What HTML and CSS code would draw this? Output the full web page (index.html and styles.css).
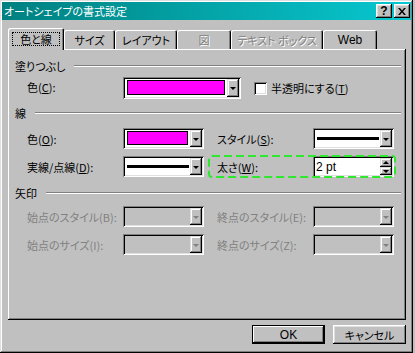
FILE: index.html
```html
<!DOCTYPE html>
<html lang="ja">
  <head>
    <meta charset="UTF-8" />
    <title>オートシェイプの書式設定</title>
    <link rel="stylesheet" href="styles.css">
  </head>
  <body>
    <div class="window">
      <div class="titlebar">
        <span class="title">オートシェイプの書式設定</span>
        <div class="caption">
          <span class="cap-btn help">?</span>
          <span class="cap-btn">
            <svg width="8" height="7" viewBox="0 0 8 7"><path d="M0 0h2l2 2.5 2-2.5h2l-3 3.5 3 3.5h-2l-2-2.5-2 2.5h-2l3-3.5z" fill="#000"/></svg>
          </span>
        </div>
      </div>

      <div class="client">
        <div class="tabs">
          <div class="tab active"><span class="focus">色と線</span></div>
          <div class="tab w-size">サイズ</div>
          <div class="tab w-layout">レイアウト</div>
          <div class="tab w-fig disabled">図</div>
          <div class="tab w-text disabled">テキスト ボックス</div>
          <div class="tab w-web latin">Web</div>
        </div>

        <div class="panel">
          <!-- 塗りつぶし -->
          <div class="group-head first"><span>塗りつぶし</span><i class="rule"></i></div>
          <div class="row r-fill">
            <span class="lbl">色(<u>C</u>):</span>
            <div class="combo wide">
              <div class="field"><span class="swatch"></span></div>
              <span class="drop"><i class="arrow"></i></span>
            </div>
            <span class="check"></span>
            <span class="check-label">半透明にする(<u>T</u>)</span>
          </div>

          <!-- 線 -->
          <div class="group-head g-line"><span>線</span><i class="rule"></i></div>
          <div class="row r-color">
            <span class="lbl">色(<u>O</u>):</span>
            <div class="combo">
              <div class="field"><span class="swatch"></span></div>
              <span class="drop"><i class="arrow"></i></span>
            </div>
            <div class="pair">
              <span class="lbl">スタイル(<u>S</u>):</span>
              <div class="combo">
                <div class="field"><span class="stroke"></span></div>
                <span class="drop"><i class="arrow"></i></span>
              </div>
            </div>
          </div>
          <div class="row r-dash">
            <span class="lbl">実線/点線(<u>D</u>):</span>
            <div class="combo">
              <div class="field"><span class="stroke"></span></div>
              <span class="drop"><i class="arrow"></i></span>
            </div>
            <div class="pair focused">
              <span class="lbl">太さ(<u>W</u>):</span>
              <div class="spin">
                <div class="field text latin">2 pt</div>
                <div class="spin-btns">
                  <span class="drop up"><i class="arrow"></i></span>
                  <span class="drop"><i class="arrow"></i></span>
                </div>
              </div>
              <svg class="focus-ring" width="188" height="23" viewBox="0 0 188 23">
                <rect x="1" y="1" width="186" height="21" rx="3" fill="none" stroke="#2ee82e" stroke-width="2" stroke-dasharray="8 4"/>
              </svg>
            </div>
          </div>

          <!-- 矢印 -->
          <div class="group-head g-arrow"><span>矢印</span><i class="rule"></i></div>
          <div class="row r-begin disabled">
            <span class="lbl">始点のスタイル(B):</span>
            <div class="combo off">
              <div class="field"></div>
              <span class="drop"><i class="arrow"></i></span>
            </div>
            <div class="pair">
              <span class="lbl">終点のスタイル(E):</span>
              <div class="combo off">
                <div class="field"></div>
                <span class="drop"><i class="arrow"></i></span>
              </div>
            </div>
          </div>
          <div class="row r-size disabled">
            <span class="lbl">始点のサイズ(I):</span>
            <div class="combo off">
              <div class="field"></div>
              <span class="drop"><i class="arrow"></i></span>
            </div>
            <div class="pair">
              <span class="lbl">終点のサイズ(Z):</span>
              <div class="combo off">
                <div class="field"></div>
                <span class="drop"><i class="arrow"></i></span>
              </div>
            </div>
          </div>
        </div>

        <div class="buttons">
          <span class="btn default latin">OK</span>
          <span class="btn">キャンセル</span>
        </div>
      </div>
    </div>
  </body>
</html>
```

FILE: styles.css
```css
* {
  box-sizing: border-box;
}
body {
  margin: 0;
  background-color: #c0c0c0;
  font-family: "Noto Sans CJK JP", "Liberation Sans", sans-serif;
  font-size: 11px;
  font-feature-settings: "palt" 1;
  line-height: 14px;
  color: #000000;
}
u {
  text-decoration-thickness: 1px;
  text-underline-offset: 1px;
}
.latin {
  font-family: "Liberation Sans", sans-serif;
  font-size: 12px;
}

/* ウィンドウ枠 */
.window {
  width: 413px;
  height: 353px;
  padding: 2px;
  background: #c0c0c0;
  box-shadow: inset -1px -1px #000000, inset 1px 1px #dfdfdf,
    inset -2px -2px #808080, inset 2px 2px #ffffff;
}
.titlebar {
  display: flex;
  align-items: center;
  justify-content: space-between;
  height: 18px;
  padding-left: 2px;
  background: linear-gradient(to right, #008080, #08c8d0);
}
.title {
  color: #ffffff;
}
.caption {
  display: flex;
  gap: 2px;
  margin-right: 1px;
}
.cap-btn {
  display: flex;
  align-items: center;
  justify-content: center;
  width: 16px;
  height: 14px;
  background: #c0c0c0;
  box-shadow: inset -1px -1px #000000, inset 1px 1px #ffffff,
    inset -2px -2px #808080, inset 2px 2px #dfdfdf;
}
.cap-btn.help {
  font-family: "Liberation Sans", sans-serif;
  font-weight: bold;
  font-size: 12px;
  padding-bottom: 1px;
}

.client {
  padding: 8px 3px 0 6px;
}

/* タブ */
.tabs {
  position: relative;
  z-index: 1;
  display: flex;
  align-items: flex-end;
  height: 21px;
}
.tab {
  display: flex;
  align-items: center;
  justify-content: center;
  height: 19px;
  padding-top: 1px;
  white-space: nowrap;
  border-radius: 2px 2px 0 0;
  box-shadow: inset 1px 1px #ffffff, inset -1px 0 #000000,
    inset -2px 0 #808080;
}
.tab.active {
  width: 56px;
  height: 22px;
  margin-bottom: -1px;
  padding-bottom: 1px;
  background: #c0c0c0;
}
.tab .focus {
  display: flex;
  align-items: center;
  justify-content: center;
  width: 48px;
  height: 14px;
  border: 1px dotted #000000;
}
.w-size { width: 51px; }
.w-layout { width: 62px; }
.w-fig { width: 54px; }
.w-text { width: 92px; }
.w-web { width: 54px; }
.tab.disabled {
  color: #808080;
  text-shadow: 1px 1px #ffffff;
}

/* パネル */
.panel {
  display: flex;
  flex-direction: column;
  width: 398px;
  height: 271px;
  padding: 10px 0 0 1px;
  box-shadow: inset -1px -1px #000000, inset 1px 1px #ffffff,
    inset -2px -2px #808080;
}
.group-head {
  display: flex;
  align-items: center;
  height: 14px;
  padding-left: 6px;
}
.group-head .rule {
  flex: 1;
  height: 2px;
  margin: 0 5px 0 9px;
  border-top: 1px solid #808080;
  border-bottom: 1px solid #ffffff;
}
.g-line { margin-top: 7px; }
.g-arrow { margin-top: 9px; }

.row {
  display: flex;
  align-items: center;
  height: 21px;
  padding-left: 18px;
}
.r-fill { margin-top: 4px; height: 22px; }
.r-fill > .lbl { margin-top: -3px; }
.r-color { margin-top: 8px; }
.r-dash { margin-top: 7px; }
.r-begin { margin-top: 6px; }
.r-size { margin-top: 7px; }
.row.disabled .lbl {
  color: #808080;
}

.lbl {
  width: 96px;
  white-space: nowrap;
}
.pair {
  display: flex;
  align-items: center;
  height: 100%;
  margin-left: 13px;
}
.pair.focused {
  position: relative;
}
.focus-ring {
  position: absolute;
  left: -9px;
  top: -1px;
}

/* コンボボックス */
.combo,
.spin {
  display: flex;
  width: 81px;
  height: 100%;
  padding: 2px;
  background: #ffffff;
  box-shadow: inset 1px 1px #808080, inset -1px -1px #ffffff,
    inset 2px 2px #000000, inset -2px -2px #dfdfdf;
}
.combo.wide {
  width: 118px;
}
.combo.off {
  background: #c0c0c0;
}
.field {
  flex: 1;
  display: flex;
  align-items: center;
  padding: 1px 2px 2px 2px;
}
.field.text {
  padding: 0 1px;
}
.swatch {
  flex: 1;
  align-self: stretch;
  background: #ff00ff;
  border: 1px solid #000000;
}
.stroke {
  flex: 1;
  height: 3px;
  margin-right: -1px;
  background: #000000;
}
.drop {
  display: flex;
  align-items: center;
  justify-content: center;
  width: 12px;
  background: #c0c0c0;
  box-shadow: inset -1px -1px #000000, inset 1px 1px #dfdfdf,
    inset -2px -2px #808080, inset 2px 2px #ffffff;
}
.arrow {
  width: 0;
  height: 0;
  margin-top: 1px;
  border-left: 3px solid transparent;
  border-right: 3px solid transparent;
  border-top: 3px solid #000000;
}
.combo.off .arrow {
  border-top-color: #808080;
}
.spin-btns {
  display: flex;
  flex-direction: column;
  width: 12px;
}
.spin-btns .drop {
  flex: 1;
  width: 12px;
}
.drop.up .arrow {
  border-top: none;
  border-bottom: 3px solid #000000;
}

/* チェックボックス */
.check {
  width: 13px;
  height: 13px;
  margin-left: 13px;
  background: #ffffff;
  box-shadow: inset 1px 1px #808080, inset -1px -1px #ffffff,
    inset 2px 2px #000000, inset -2px -2px #dfdfdf;
}
.check-label {
  margin-left: 4px;
}

/* ボタン */
.buttons {
  display: flex;
  justify-content: flex-end;
  gap: 8px;
  margin-top: 5px;
  margin-right: 2px;
}
.btn {
  display: flex;
  align-items: center;
  justify-content: center;
  width: 73px;
  height: 19px;
  box-shadow: inset -1px -1px #000000, inset 1px 1px #ffffff,
    inset -2px -2px #808080, inset 2px 2px #dfdfdf;
}
.btn.default {
  box-shadow: inset 0 0 0 1px #000000, inset -2px -2px #000000,
    inset 2px 2px #ffffff, inset -3px -3px #808080;
}
```
